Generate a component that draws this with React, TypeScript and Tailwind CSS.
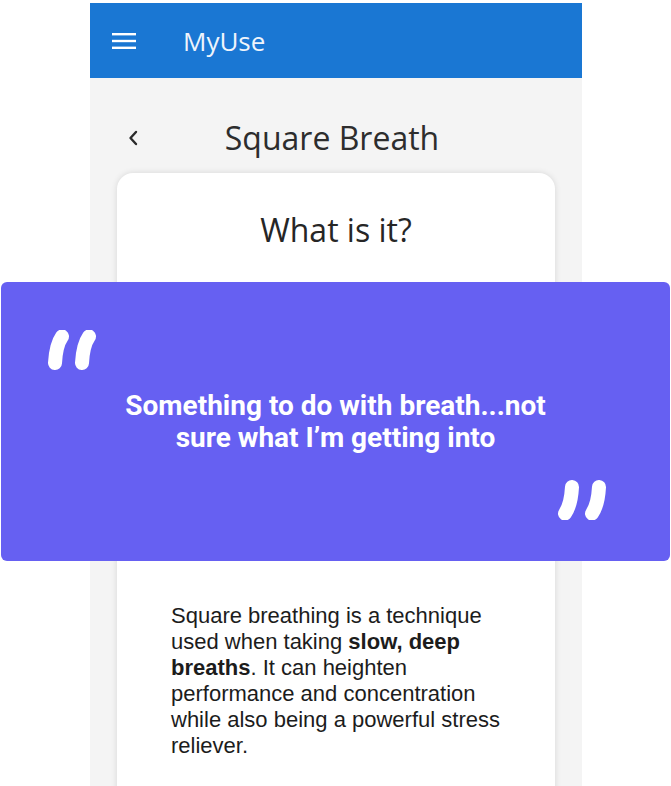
export default function App() {
  return (
    <div className="relative h-[786px] overflow-hidden bg-white font-['Open_Sans',sans-serif]">
      {/* phone column */}
      <div className="ml-[90px] mt-[3px] w-[492px] h-[820px] bg-[#f4f4f4] flex flex-col">
        <header className="h-[75px] bg-[#1a77d3] flex items-center pl-[22px]">
          <svg width="24" height="16" viewBox="0 0 24 16" className="block">
            <rect x="0" y="0" width="24" height="2.4" fill="#fff" />
            <rect x="0" y="6.8" width="24" height="2.4" fill="#fff" />
            <rect x="0" y="13.6" width="24" height="2.4" fill="#fff" />
          </svg>
          <span className="ml-[47px] text-[26px] leading-none text-[#eef4fc]">MyUse</span>
        </header>

        <div className="flex items-center pl-[38px] pr-[56px] pt-[38px] mb-[13px]">
          <svg width="10" height="16" viewBox="0 0 10 16" className="block">
            <path d="M8 2 L2.5 8 L8 14" fill="none" stroke="#2b2b2b" strokeWidth="2.4" strokeLinecap="round" strokeLinejoin="round" />
          </svg>
          <h1 className="flex-1 text-center text-[32px] leading-[44px] text-[#2d2d2d]">Square Breath</h1>
        </div>

        <div className="mx-[27px] flex-1 bg-white rounded-2xl shadow-[0_0_6px_rgba(0,0,0,0.12)] pt-[35px]">
          <h2 className="text-center text-[32px] leading-[44px] text-[#262626]">What is it?</h2>
          <p className="mt-[351px] pl-[54px] w-[390px] font-['Liberation_Sans',Arial,sans-serif] text-[22px] leading-[26px] text-[#1c1c1c]">
            Square breathing is a technique used when taking <b>slow, deep breaths</b>. It can heighten performance and concentration while also being a powerful stress reliever.
          </p>
        </div>
      </div>

      {/* quote banner over the page */}
      <div className="absolute left-[1px] top-[282px] w-[669px] h-[279px] rounded-md bg-[#6660f2] flex flex-col px-[46px] pt-[48px] font-['Roboto',sans-serif]">
        <svg width="51" height="40" viewBox="0 0 51 40" className="block">
          <path d="M15 6.5 Q 9 15 8 33" fill="none" stroke="#fff" strokeWidth="14" strokeLinecap="round" />
          <path d="M42 6.5 Q 36 15 35 33" fill="none" stroke="#fff" strokeWidth="14" strokeLinecap="round" />
        </svg>
        <p className="mt-[20px] mx-auto w-[460px] text-center text-white font-bold text-[28px] leading-[32px]">
          Something to do with breath...not sure what I’m getting into
        </p>
        <svg width="51" height="40" viewBox="0 0 51 40" className="block self-end mt-[26px] mr-[17px] rotate-180">
          <path d="M15 6.5 Q 9 15 8 33" fill="none" stroke="#fff" strokeWidth="14" strokeLinecap="round" />
          <path d="M42 6.5 Q 36 15 35 33" fill="none" stroke="#fff" strokeWidth="14" strokeLinecap="round" />
        </svg>
      </div>
    </div>
  );
}
